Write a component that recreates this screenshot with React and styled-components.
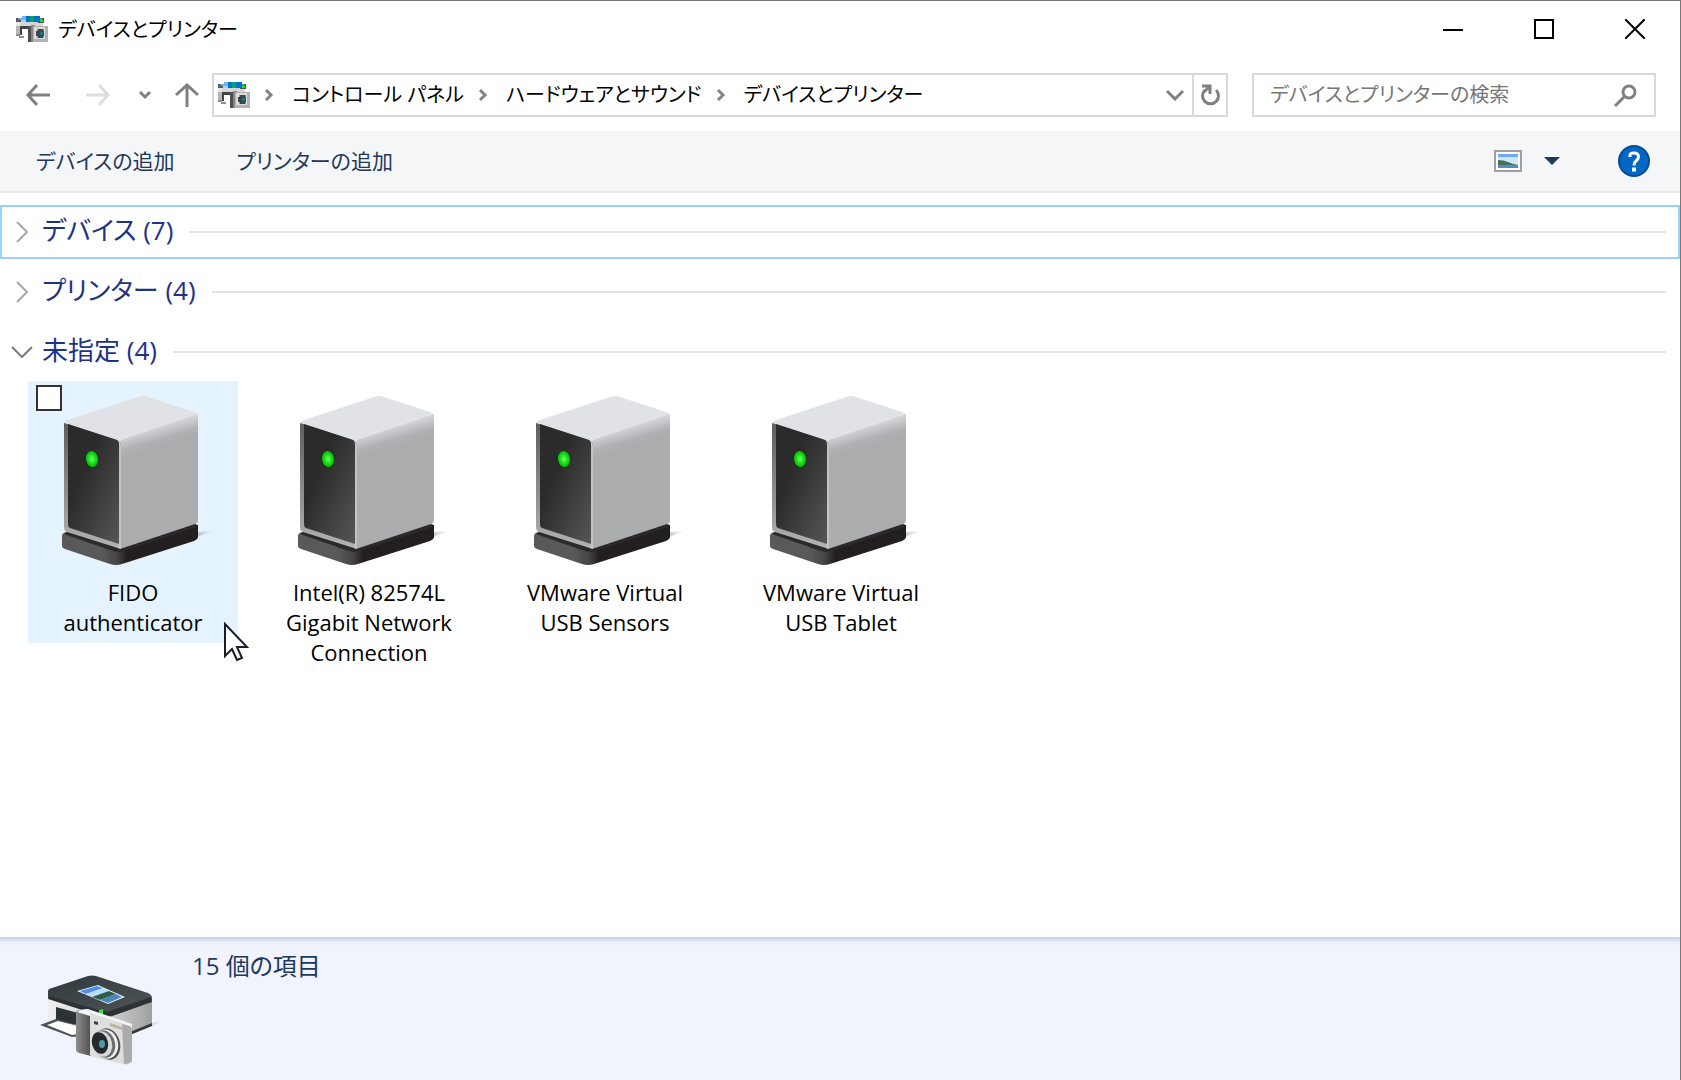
import React from "react";
import styled, { createGlobalStyle, css } from "styled-components";

const ui = `"Open Sans", "Noto Sans CJK JP", sans-serif`;

const Global = createGlobalStyle`
  *, *::before, *::after { box-sizing: border-box; }
  body {
    margin: 0;
    background: #fff;
    color: #000;
    font-family: ${ui};
    font-size: 20px;
    line-height: 30px;
    font-feature-settings: "palt";
  }
  button, input {
    font: inherit;
    font-feature-settings: inherit;
    color: inherit;
  }
  button {
    display: flex;
    align-items: center;
    justify-content: center;
    padding: 0;
    border: 0;
    background: none;
  }
  svg { display: block; flex: none; }
  h1, h2, p, ul, ol { margin: 0; padding: 0; font-weight: 400; }
`;

const Window = styled.div`
  min-height: 100vh;
  display: flex;
  flex-direction: column;
  border-top: 1px solid #777;
  border-right: 1px solid #777;
`;

const TitleBar = styled.header`
  height: 56px;
  display: flex;
  align-items: center;
  padding-left: 16px;
`;

const Title = styled.h1`
  flex: 1;
  padding: 2px 0 0 10px;
  font-size: 20px;
  line-height: 30px;
`;

const CaptionButton = styled.button`
  width: 91px;
  height: 56px;
`;

const NavRow = styled.nav`
  display: flex;
  align-items: center;
  height: 74px;
  padding: 2px 24px 0 8px;
`;

const NavButton = styled.button`
  width: ${(p) => p.$width}px;
  height: 44px;
`;

const AddressBar = styled.div`
  flex: 1;
  display: flex;
  align-items: center;
  height: 44px;
  padding-left: 4px;
  border: 2px solid #d9d9d9;
`;

const Crumbs = styled.ol`
  flex: 1;
  display: flex;
  align-items: center;
  list-style: none;
`;

const Crumb = styled.li`
  display: flex;
  align-items: center;
  svg { margin: 0 18px 0 14px; }
`;

const CrumbLink = styled.a`
  color: #000;
  text-decoration: none;
`;

const AddressButton = styled.button`
  width: 34px;
  height: 40px;
  ${(p) => p.$divided && css`border-left: 2px solid #d9d9d9;`}
`;

const SearchBox = styled.label`
  display: flex;
  align-items: center;
  width: 404px;
  height: 44px;
  margin-left: 24px;
  padding: 0 16px;
  border: 2px solid #d9d9d9;
`;

const SearchInput = styled.input`
  flex: 1;
  min-width: 0;
  padding: 0;
  border: 0;
  outline: 0;
  &::placeholder { color: #767676; opacity: 1; }
`;

const Toolbar = styled.div`
  display: flex;
  align-items: center;
  height: 62px;
  padding: 0 30px 0 36px;
  background: #f5f6f8;
  border-bottom: 2px solid #e8e9eb;
  color: #1e395b;
`;

const Command = styled.button`
  margin-right: 62px;
  font-size: 21px;
`;

const Spacer = styled.div`
  flex: 1;
`;

const ToolIcon = styled.button`
  height: 40px;
  margin-left: ${(p) => p.$gap}px;
`;

const Content = styled.main`
  flex: 1;
  padding-top: 12px;
`;

const GroupHeader = styled.button`
  width: 100%;
  height: 54px;
  justify-content: flex-start;
  padding-right: 12px;
  border: 2px solid ${(p) => (p.$focused ? "#99d1ff" : "transparent")};
  color: #1e3287;
  font-size: 26px;
  line-height: 36px;
  & + & { margin-top: 6px; }
`;

const GroupName = styled.span`
  padding-bottom: 4px;
`;

const Chevron = styled.span`
  width: 40px;
  display: flex;
  justify-content: center;
`;

const Rule = styled.span`
  flex: 1;
  height: 2px;
  margin-left: 16px;
  background: #e2e2e2;
`;

const Grid = styled.ul`
  display: flex;
  flex-wrap: wrap;
  align-items: flex-start;
  gap: 26px;
  padding: 2px 0 0 28px;
  list-style: none;
`;

const Tile = styled.li`
  position: relative;
  width: 210px;
  padding: 14px 10px 6px;
  text-align: center;
  font-size: 22px;
  line-height: 30px;
  background: ${(p) => (p.$hot ? "#e5f3ff" : "transparent")};
  svg { margin: 0 auto 10px; }
`;

const TileCheck = styled.input`
  appearance: none;
  position: absolute;
  left: 8px;
  top: 4px;
  width: 26px;
  height: 26px;
  margin: 0;
  border: 2px solid #333;
  background: #fff;
`;

const Pointer = styled.span`
  position: absolute;
  left: 195px;
  top: 241px;
  z-index: 1;
  svg { margin: 0; }
`;

const Details = styled.footer`
  display: flex;
  align-items: flex-start;
  gap: 32px;
  height: 143px;
  padding: 8px 0 0 36px;
  background: linear-gradient(#c9d6e8 0 2px, #d9e4f1 2px 4px, #e8eff7 4px 6px, #f1f4fc 8px);
  color: #1e395b;
  svg { margin-top: 30px; }
`;

const ItemCount = styled.p`
  padding-top: 6px;
  font-size: 24px;
`;

const DeviceGlyph = () => (
  <svg width="32" height="26" viewBox="0 0 32 26" aria-hidden="true">
    <path d="M2 6h25v5H2z" fill="#d4d6d7" />
    <path d="M0 2h6v4H0zM22 2h6v5h-6z" fill="#53585a" />
    <path d="M2 2h4v2H2zM22 2h4v2h-4z" fill="#85898b" />
    <path d="M6 0h5v4H4V2h2z" fill="#6db4f2" />
    <path d="M5 4h6v2H5z" fill="#a6d3f8" />
    <path d="M10 0h14v4l-2 2H10z" fill="#0070d0" />
    <path d="M14 0h4v6h-4z" fill="#00a864" />
    <path d="M24 4h3v2h-3z" fill="#00f21a" />
    <path d="M0 6h4v4H0z" fill="#e8e8e8" />
    <path d="M0 10h4v8H0z" fill="#b5b5b5" />
    <path d="M4 10h8v9H4z" fill="#3f4244" />
    <path d="M6 13h6v8H8l-2-2z" fill="#fff" />
    <path d="M0 18h4v2h4v2H3v-2H0z" fill="#8c9092" />
    <path d="M12 10h4v16h-4z" fill="#4f4f4f" />
    <path d="M15 9h4v17h-4z" fill="#858585" />
    <path d="M17 10h15v16H17z" fill="#b2b2b2" />
    <path d="M18 11h11v12H18z" fill="#dcdcdc" />
    <path d="M21 13h7v9h-7z" fill="#8e9496" />
    <path d="M22 13h5v2h1v5h-1v2h-5v-2h-2v-5h2z" fill="#3b474c" />
    <path d="M24 16h3v3h-3z" fill="#24707a" />
  </svg>
);

const Stroke = ({ w, h, d, color = "#808080", width = 3 }) => (
  <svg width={w} height={h} viewBox={`0 0 ${w} ${h}`} fill="none" stroke={color} strokeWidth={width} aria-hidden="true">
    <path d={d} />
  </svg>
);

const Separator = () => <Stroke w={10} h={12} d="M2 1l5 5-5 5" color="#858585" />;

const DeviceBox = () => (
  <svg width="160" height="172" viewBox="0 0 160 172" aria-hidden="true">
    <defs>
      <linearGradient id="side" gradientUnits="userSpaceOnUse" x1="100" y1="28" x2="107" y2="52">
        <stop offset="0" stopColor="#e0e1e5" />
        <stop offset=".35" stopColor="#c9cacd" />
        <stop offset=".7" stopColor="#b0b1b4" />
        <stop offset="1" stopColor="#abacae" />
      </linearGradient>
      <linearGradient id="front" x1="0" y1="0" x2="1" y2="1">
        <stop offset=".35" stopColor="#2b2b2b" />
        <stop offset="1" stopColor="#565656" />
      </linearGradient>
      <linearGradient id="rim" x1="0" y1="0" x2="0" y2="1">
        <stop offset="0" stopColor="#5e5e5e" />
        <stop offset="1" stopColor="#b4b4b4" />
      </linearGradient>
      <linearGradient id="base" x1="0" y1="0" x2="1" y2="0">
        <stop offset=".3" stopColor="#595959" />
        <stop offset=".4" stopColor="#474546" />
        <stop offset=".48" stopColor="#231f20" />
      </linearGradient>
      <linearGradient id="shade" x1="0" y1="0" x2="1" y2="0">
        <stop offset="0" stopColor="#000" stopOpacity=".2" />
        <stop offset="1" stopColor="#000" stopOpacity="0" />
      </linearGradient>
      <radialGradient id="led">
        <stop offset="0" stopColor="#7bff72" />
        <stop offset=".5" stopColor="#22e51c" />
        <stop offset="1" stopColor="#00bd08" />
      </radialGradient>
    </defs>
    <path d="M144 137L160 136L144 142z" fill="url(#shade)" />
    <path d="M9 141Q9 138 13 137L138 128L145 130V142Q145 144 141 146L69 169Q63 171 57 169L12 154Q9 153 9 151z" fill="url(#base)" />
    <path d="M11 139L57 155Q64 158 71 156L144 132L140 127L66 150L16 136z" fill="#2b292a" />
    <path d="M11 29Q11 26 15 25L85 2Q90 0 95 2L141 17Q145 18 145 22L67 47z" fill="#e1e2e6" />
    <path d="M67 48Q67 45 71 44L145 19V125Q145 128 142 129L67 154z" fill="url(#side)" />
    <path d="M11 28L64 45Q68 47 68 51V154L14 137Q11 136 11 132z" fill="url(#rim)" />
    <path d="M64 45Q68 47 68 51V154L65 153z" fill="#c4c4c4" />
    <path d="M15 29L64 45Q66 46 66 50V149L17 133Q15 132 15 129z" fill="url(#front)" />
    <ellipse cx="39" cy="64" rx="6" ry="8" fill="url(#led)" transform="rotate(-8 39 64)" />
  </svg>
);

const PrinterCamera = () => (
  <svg width="124" height="96" viewBox="0 0 124 96" aria-hidden="true">
    <defs>
      <linearGradient id="lid" x1="0" y1="0" x2="1" y2="1">
        <stop offset="0" stopColor="#30383b" />
        <stop offset="1" stopColor="#51575a" />
      </linearGradient>
      <linearGradient id="body" x1="0" y1="0" x2="1" y2="0">
        <stop offset="0" stopColor="#efefef" />
        <stop offset=".65" stopColor="#c9c9c9" />
        <stop offset="1" stopColor="#a0a0a0" />
      </linearGradient>
      <linearGradient id="grip" x1="0" y1="0" x2="1" y2="0">
        <stop offset="0" stopColor="#8d8d8d" />
        <stop offset="1" stopColor="#4f4f4f" />
      </linearGradient>
    </defs>
    <path d="M116 48L124 47L116 52z" fill="#dcdfe6" />
    <path d="M12 24L72 42L116 24V50L94 59L40 58L12 46z" fill="url(#body)" />
    <path d="M94 57L116 48V51L94 60z" fill="#33383a" />
    <path d="M12 16Q12 14 16 13L52 1Q56 0 60 1L112 18Q116 20 116 23V27L76 41Q70 42 65 41L12 23z" fill="url(#lid)" />
    <path d="M14 21L66 36Q70 37 74 36L115 22V27L76 41Q70 43 65 41L12 24z" fill="#2b3134" />
    <path d="M41 16L62 10L89 22L72 29z" fill="#e4f0fa" />
    <path d="M44 16L61 11L67 13L50 19z" fill="#4f91ee" />
    <path d="M50 19L67 13L73 16L56 22z" fill="#b9dcff" />
    <path d="M56 22L73 16L80 19L64 25z" fill="#2e5c45" />
    <path d="M64 25L80 19L86 22L72 28z" fill="#4d86bd" />
    <path d="M20 32L42 38V50L20 46z" fill="#2c3235" />
    <path d="M4 50L20 44L44 51V61L36 62z" fill="#4b5255" />
    <path d="M11 50L22 46L42 51V59L36 60z" fill="#fff" />
    <path d="M63 35l4-1v5h-4z" fill="#34e63c" />
    <path d="M40 38Q40 35 44 35L55 37V81L43 78Q40 77 40 75z" fill="url(#grip)" />
    <path d="M41 37Q44 34 52 34L96 49V54z" fill="#f4f4f4" />
    <path d="M54 38L86 48Q91 49 91 53V90L57 82Q53 81 54 77z" fill="#dedede" />
    <path d="M86 49L94 51Q96 52 96 55V85Q96 89 88 89z" fill="#ababab" />
    <path d="M74 48L86 52V55L74 51z" fill="#b9b49b" />
    <path d="M58 46l4 1v3l-4-1z" fill="#3d4244" />
    <ellipse cx="72" cy="69" rx="12" ry="16" fill="#4b5052" transform="rotate(-15 72 69)" />
    <ellipse cx="70" cy="69" rx="12" ry="15" fill="#ededed" transform="rotate(-15 70 69)" />
    <ellipse cx="68" cy="69" rx="11" ry="14" fill="#6b6f71" transform="rotate(-15 68 69)" />
    <ellipse cx="66" cy="69" rx="10" ry="13" fill="#d9d9d9" transform="rotate(-15 66 69)" />
    <ellipse cx="64" cy="68" rx="8" ry="11" fill="#24292b" transform="rotate(-15 64 68)" />
    <ellipse cx="66" cy="69" rx="3" ry="4" fill="#4b9aa4" />
  </svg>
);

const crumbs = ["コントロール パネル", "ハードウェアとサウンド", "デバイスとプリンター"];

const groups = [
  { name: "デバイス", count: 7, focused: true },
  { name: "プリンター", count: 4 },
  { name: "未指定", count: 4, open: true },
];

const devices = [
  { name: "FIDO authenticator", hot: true },
  { name: "Intel(R) 82574L Gigabit Network Connection" },
  { name: "VMware Virtual USB Sensors" },
  { name: "VMware Virtual USB Tablet" },
];

export default function App() {
  return (
    <>
      <Global />
      <Window>
        <TitleBar>
          <DeviceGlyph />
          <Title>デバイスとプリンター</Title>
          <CaptionButton aria-label="最小化"><Stroke w={20} h={20} d="M0 11h20" color="#000" width={2} /></CaptionButton>
          <CaptionButton aria-label="最大化"><Stroke w={20} h={20} d="M1 1h18v18H1z" color="#000" width={2} /></CaptionButton>
          <CaptionButton aria-label="閉じる"><Stroke w={20} h={20} d="M0 0L20 20M20 0L0 20" color="#000" width={2} /></CaptionButton>
        </TitleBar>
        <NavRow aria-label="ナビゲーション">
          <NavButton $width={60} aria-label="戻る"><Stroke w={24} h={22} d="M24 11H2M11 1L2 11l9 10" /></NavButton>
          <NavButton $width={60} aria-label="進む" disabled><Stroke w={24} h={22} d="M0 11h22M13 1l9 10-9 10" color="#dedede" /></NavButton>
          <NavButton $width={34} aria-label="最近の場所"><Stroke w={14} h={10} d="M2 2l5 5 5-5" /></NavButton>
          <NavButton $width={50} aria-label="上へ"><Stroke w={24} h={24} d="M12 24V2M1 12L12 2l11 10" /></NavButton>
          <AddressBar>
            <DeviceGlyph />
            <Crumbs>
              {crumbs.map((name) => (
                <Crumb key={name}>
                  <Separator />
                  <CrumbLink href="#">{name}</CrumbLink>
                </Crumb>
              ))}
            </Crumbs>
            <AddressButton aria-label="以前の場所"><Stroke w={18} h={12} d="M1 2l8 8 8-8" /></AddressButton>
            <AddressButton $divided aria-label="最新の情報に更新">
              <svg width="20" height="22" viewBox="0 0 20 22" fill="none" stroke="#808080" strokeWidth="3" aria-hidden="true">
                <path d="M5 6A8 8 0 1 0 16 6" />
                <path d="M2 2H10V10M10 2L4 8" />
              </svg>
            </AddressButton>
          </AddressBar>
          <SearchBox>
            <SearchInput type="search" aria-label="デバイスとプリンターの検索" placeholder="デバイスとプリンターの検索" />
            <svg width="24" height="24" viewBox="0 0 24 24" fill="none" stroke="#808080" strokeWidth="3" aria-hidden="true">
              <circle cx="15" cy="9" r="6" />
              <path d="M11 13L1 23" />
            </svg>
          </SearchBox>
        </NavRow>
        <Toolbar>
          <Command>デバイスの追加</Command>
          <Command>プリンターの追加</Command>
          <Spacer />
          <ToolIcon $gap={0} aria-label="表示方法の変更">
            <svg width="28" height="22" viewBox="0 0 28 22" aria-hidden="true">
              <path d="M1 1h26v20H1z" fill="#fff" stroke="#a0a0a0" strokeWidth="2" />
              <path d="M4 4h20v14H4z" fill="#cfe6fb" />
              <path d="M4 4h20v3H4z" fill="#70a8f5" />
              <path d="M4 10q6 0 10 2t10 3v1H4z" fill="#43715c" />
              <path d="M4 15h20v3H4z" fill="#558ec6" />
            </svg>
          </ToolIcon>
          <ToolIcon $gap={22} aria-label="その他のオプション">
            <svg width="16" height="10" viewBox="0 0 16 10" aria-hidden="true"><path d="M0 1h16L8 9z" fill="#1e395b" /></svg>
          </ToolIcon>
          <ToolIcon $gap={58} aria-label="ヘルプ">
            <svg width="32" height="32" viewBox="0 0 32 32" aria-hidden="true">
              <circle cx="16" cy="16" r="15" fill="#0067c6" stroke="#0a4c8c" strokeWidth="2" />
              <path d="M12 12V10Q12 8 16 8Q20.500 8 20.500 12Q20.500 14 18 16Q16 17.500 16 20.500" fill="none" stroke="#fff" strokeWidth="3" />
              <path d="M14 22.500h4v4h-4z" fill="#fff" />
            </svg>
          </ToolIcon>
        </Toolbar>
        <Content>
          {groups.map((g) => (
            <GroupHeader key={g.name} $focused={g.focused} aria-expanded={!!g.open}>
              <Chevron>
                {g.open
                  ? <Stroke w={22} h={12} d="M1 1l10 10L21 1" color="#7a7a7a" width={2} />
                  : <Stroke w={12} h={22} d="M1 1l10 10L1 21" color="#a8a8a8" width={2} />}
              </Chevron>
              <GroupName>{g.name} ({g.count})</GroupName>
              <Rule />
            </GroupHeader>
          ))}
          <Grid>
            {devices.map((d) => (
              <Tile key={d.name} $hot={d.hot}>
                {d.hot && <TileCheck type="checkbox" aria-label={d.name} />}
                <DeviceBox />
                {d.name}
                {d.hot && (
                  <Pointer>
                    <svg width="26" height="40" viewBox="0 0 26 40" aria-hidden="true">
                      <path d="M2 2V34L9 27L14 38L19 36L14 25H24z" fill="#fff" stroke="#1b1b2b" strokeWidth="2" />
                    </svg>
                  </Pointer>
                )}
              </Tile>
            ))}
          </Grid>
        </Content>
        <Details>
          <PrinterCamera />
          <ItemCount>15 個の項目</ItemCount>
        </Details>
      </Window>
    </>
  );
}
